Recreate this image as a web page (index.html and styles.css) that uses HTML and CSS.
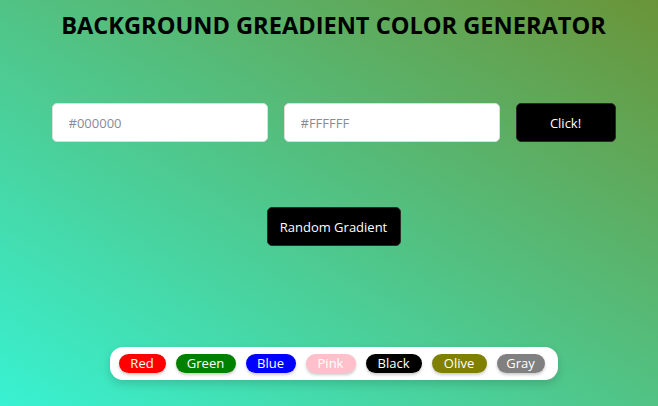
FILE: index.html
```html
<!DOCTYPE html>
<html>
<head>
<meta charset="utf-8">
<link rel="stylesheet" href="styles.css">
</head>
<body>
<main class="page">
  <h1 class="title">BACKGROUND GREADIENT COLOR GENERATOR</h1>
  <div class="inputs">
    <input class="color-input" type="text" placeholder="#000000">
    <input class="color-input" type="text" placeholder="#FFFFFF">
    <button class="btn btn-click">Click!</button>
  </div>
  <div class="random-row">
    <button class="btn btn-random">Random Gradient</button>
  </div>
  <div class="palette-row">
    <div class="palette">
      <span class="pill pill-red">Red</span>
      <span class="pill pill-green">Green</span>
      <span class="pill pill-blue">Blue</span>
      <span class="pill pill-pink">Pink</span>
      <span class="pill pill-black">Black</span>
      <span class="pill pill-olive">Olive</span>
      <span class="pill pill-gray">Gray</span>
    </div>
  </div>
</main>
</body>
</html>
```
FILE: styles.css
```css
html, body {
  margin: 0;
  height: 100%;
}
body {
  background: linear-gradient(to right top, #38f2d2, #6a9438);
  font-family: "Open Sans", "Noto Sans", sans-serif;
  overflow: hidden;
}
.page {
  display: flex;
  flex-direction: column;
  align-items: center;
  height: 406px;
  padding-left: 9px;
  box-sizing: border-box;
}
.title {
  margin: 9px 0 0;
  font-size: 23.6px;
  font-weight: 700;
  color: #000;
  line-height: 32px;
}
.inputs {
  display: flex;
  gap: 16px;
  margin-top: 62px;
}
.color-input {
  width: 216px;
  height: 39px;
  box-sizing: border-box;
  border: 1px solid #ddd;
  border-radius: 5px;
  background: #fff;
  padding: 0 16px;
  font-family: inherit;
  font-size: 13px;
  outline: none;
}
.color-input::placeholder {
  color: #8a8a95;
}
.btn {
  height: 39px;
  box-sizing: border-box;
  background: #000;
  color: #fff;
  border: 1px solid #2a2a2a;
  border-radius: 5px;
  font-family: inherit;
  font-size: 13px;
  cursor: pointer;
}
.btn-click {
  width: 100px;
}
.random-row {
  margin-top: 65px;
}
.btn-random {
  width: 134px;
}
.palette-row {
  margin-top: 101px;
}
.palette {
  display: flex;
  gap: 10px;
  background: #fff;
  border-radius: 13px;
  padding: 7px 13px 7px 9px;
  box-shadow: 0 4px 10px rgba(0, 0, 0, 0.15);
}
.pill {
  height: 19px;
  line-height: 19px;
  border-radius: 10px;
  color: #fff;
  font-size: 13px;
  text-align: center;
  box-shadow: 0 2px 3px rgba(0, 0, 0, 0.2);
}
.pill-red { background: #ff0000; width: 47px; }
.pill-green { background: #008000; width: 60px; }
.pill-blue { background: #0000ff; width: 50px; }
.pill-pink { background: #ffc0cb; width: 50px; }
.pill-black { background: #000000; width: 56px; }
.pill-olive { background: #808000; width: 55px; }
.pill-gray { background: #808080; width: 48px; }
```
